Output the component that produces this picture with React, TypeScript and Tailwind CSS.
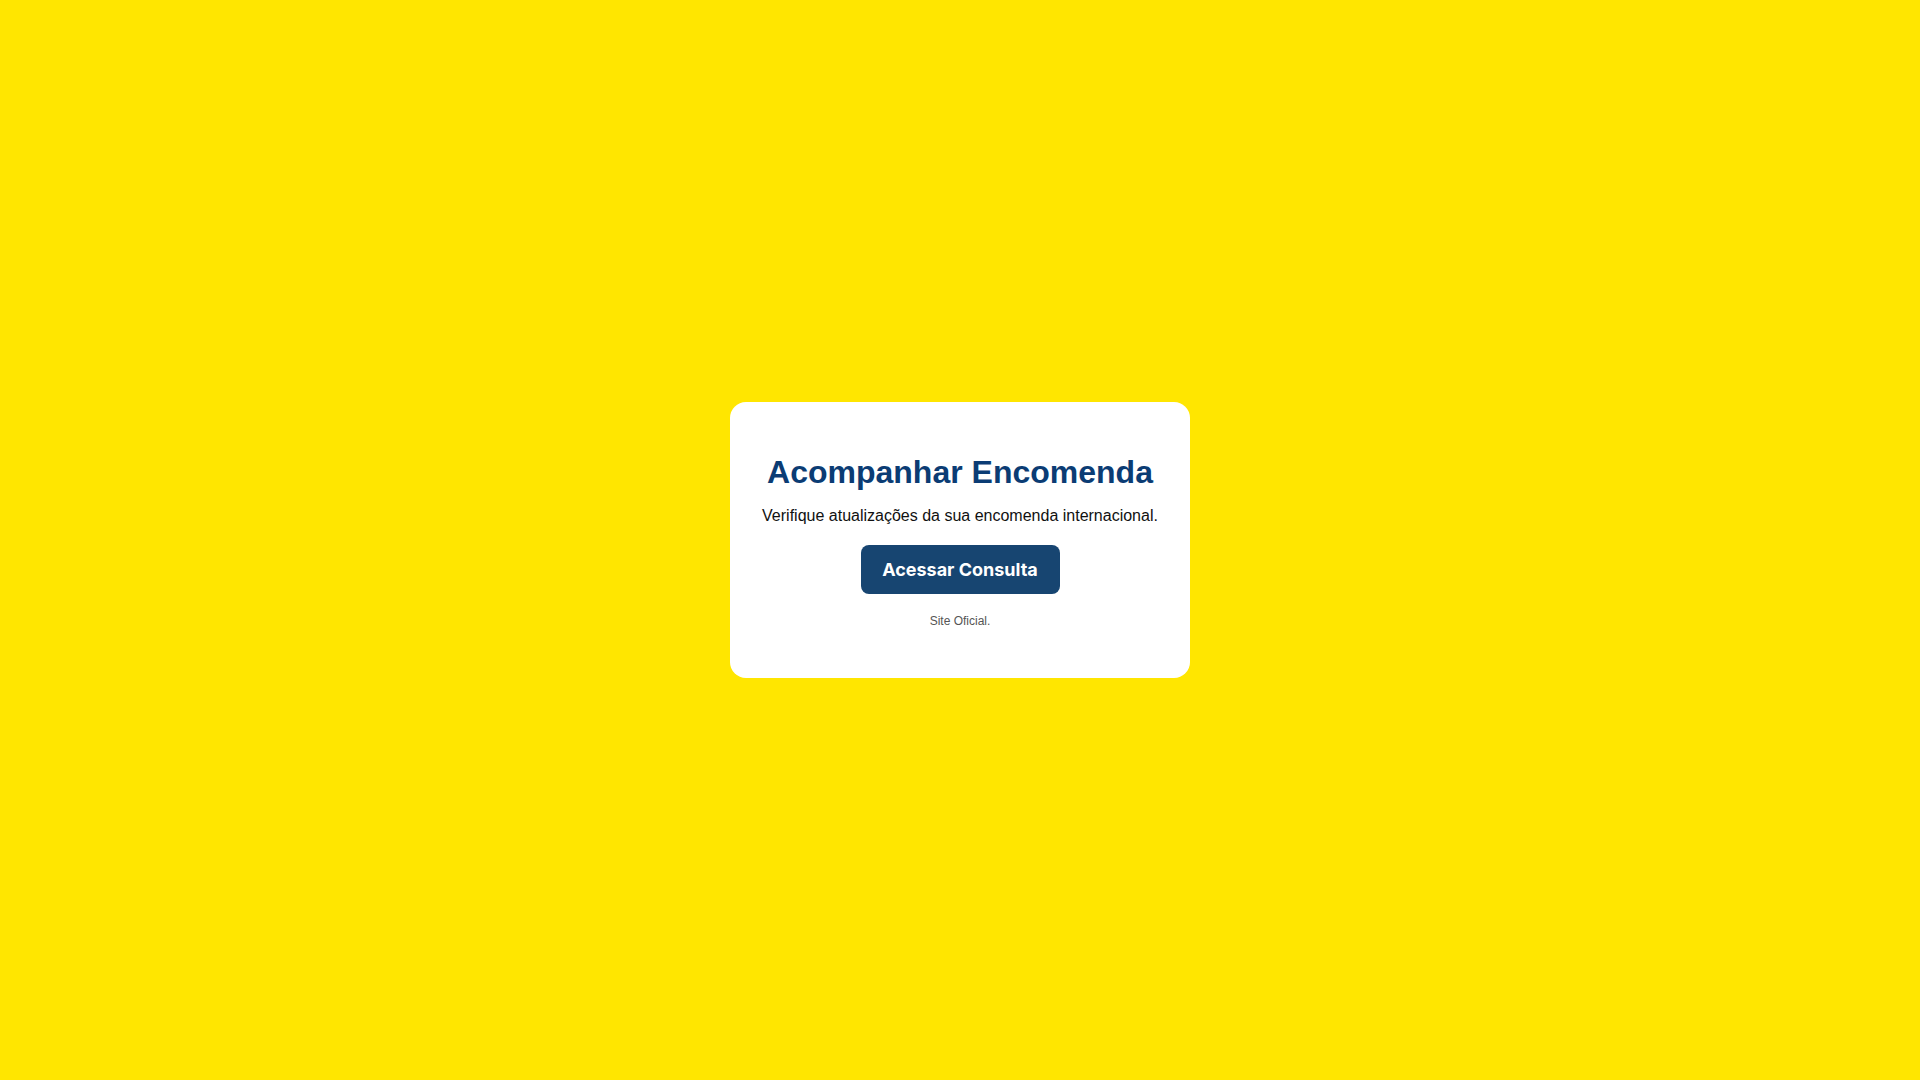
export default function App() {
  return (
    <div className="min-h-screen w-full bg-[#ffe600] flex items-center justify-center font-['Liberation_Sans',Arial,sans-serif]">
      <div className="w-[460px] bg-white rounded-[16px] px-[30px] pt-[52px] pb-[50px] flex flex-col items-center text-center">
        <h1 className="text-[32px] leading-[37px] font-bold text-[#0b3c74]">Acompanhar Encomenda</h1>
        <p className="mt-[16px] text-[16px] leading-[18px] text-[#111]">
          Verifique atualizações da sua encomenda internacional.
        </p>
        <button className="mt-[20px] h-[49px] w-[199px] rounded-[8px] bg-[#174571] text-white text-[18px] font-bold font-['Inter',sans-serif]">
          Acessar Consulta
        </button>
        <p className="mt-[20px] text-[12px] leading-[14px] text-[#555]">Site Oficial.</p>
      </div>
    </div>
  );
}
